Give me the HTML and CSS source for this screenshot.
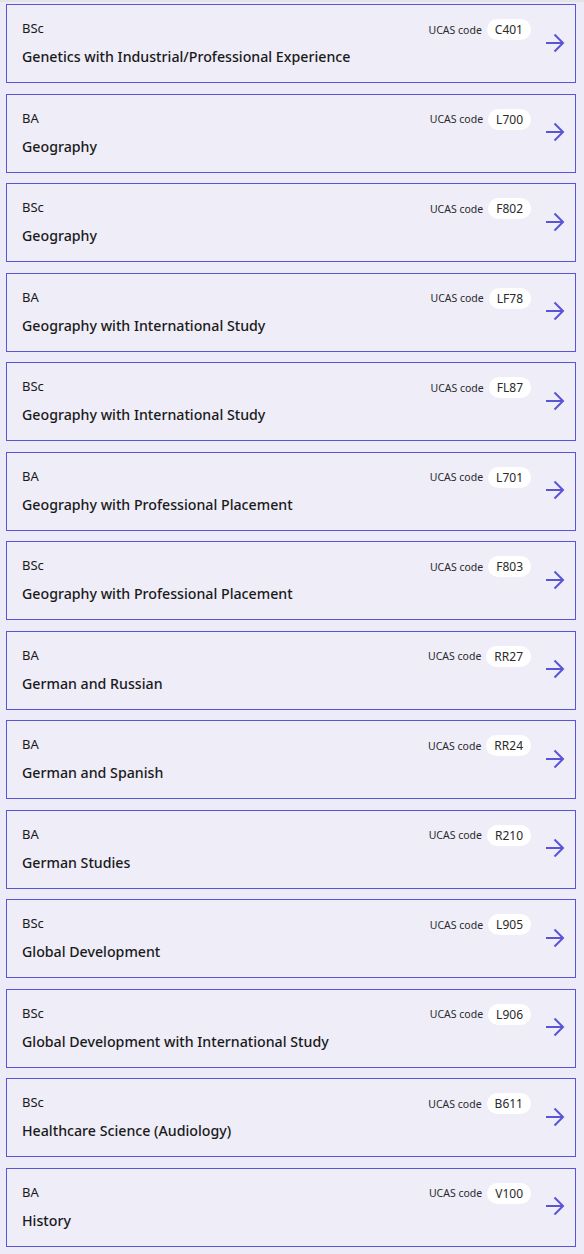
FILE: index.html
```html
<!DOCTYPE html>
<html lang="en">
<head>
    <meta charset="UTF-8" />
    <meta name="viewport" content="width=device-width, initial-scale=1.0" />
    <title>Courses</title>
    <link rel="stylesheet" href="styles.css">
</head>
<body>
    <!-- course list -->
    <ul class="course-list">
        <li class="course">
            <div class="course-info">
                <span class="degree">BSc</span>
                <span class="title">Genetics with Industrial/Professional Experience</span>
            </div>
            <div class="ucas">UCAS code <span class="code">C401</span></div>
            <svg class="arrow" viewBox="0 0 22 20"><path d="M3 10H20M11.5 1.5L20 10L11.5 18.5" /></svg>
        </li>
        <li class="course">
            <div class="course-info">
                <span class="degree">BA</span>
                <span class="title">Geography</span>
            </div>
            <div class="ucas">UCAS code <span class="code">L700</span></div>
            <svg class="arrow" viewBox="0 0 22 20"><path d="M3 10H20M11.5 1.5L20 10L11.5 18.5" /></svg>
        </li>
        <li class="course">
            <div class="course-info">
                <span class="degree">BSc</span>
                <span class="title">Geography</span>
            </div>
            <div class="ucas">UCAS code <span class="code">F802</span></div>
            <svg class="arrow" viewBox="0 0 22 20"><path d="M3 10H20M11.5 1.5L20 10L11.5 18.5" /></svg>
        </li>
        <li class="course">
            <div class="course-info">
                <span class="degree">BA</span>
                <span class="title">Geography with International Study</span>
            </div>
            <div class="ucas">UCAS code <span class="code">LF78</span></div>
            <svg class="arrow" viewBox="0 0 22 20"><path d="M3 10H20M11.5 1.5L20 10L11.5 18.5" /></svg>
        </li>
        <li class="course">
            <div class="course-info">
                <span class="degree">BSc</span>
                <span class="title">Geography with International Study</span>
            </div>
            <div class="ucas">UCAS code <span class="code">FL87</span></div>
            <svg class="arrow" viewBox="0 0 22 20"><path d="M3 10H20M11.5 1.5L20 10L11.5 18.5" /></svg>
        </li>
        <li class="course">
            <div class="course-info">
                <span class="degree">BA</span>
                <span class="title">Geography with Professional Placement</span>
            </div>
            <div class="ucas">UCAS code <span class="code">L701</span></div>
            <svg class="arrow" viewBox="0 0 22 20"><path d="M3 10H20M11.5 1.5L20 10L11.5 18.5" /></svg>
        </li>
        <li class="course">
            <div class="course-info">
                <span class="degree">BSc</span>
                <span class="title">Geography with Professional Placement</span>
            </div>
            <div class="ucas">UCAS code <span class="code">F803</span></div>
            <svg class="arrow" viewBox="0 0 22 20"><path d="M3 10H20M11.5 1.5L20 10L11.5 18.5" /></svg>
        </li>
        <li class="course">
            <div class="course-info">
                <span class="degree">BA</span>
                <span class="title">German and Russian</span>
            </div>
            <div class="ucas">UCAS code <span class="code">RR27</span></div>
            <svg class="arrow" viewBox="0 0 22 20"><path d="M3 10H20M11.5 1.5L20 10L11.5 18.5" /></svg>
        </li>
        <li class="course">
            <div class="course-info">
                <span class="degree">BA</span>
                <span class="title">German and Spanish</span>
            </div>
            <div class="ucas">UCAS code <span class="code">RR24</span></div>
            <svg class="arrow" viewBox="0 0 22 20"><path d="M3 10H20M11.5 1.5L20 10L11.5 18.5" /></svg>
        </li>
        <li class="course">
            <div class="course-info">
                <span class="degree">BA</span>
                <span class="title">German Studies</span>
            </div>
            <div class="ucas">UCAS code <span class="code">R210</span></div>
            <svg class="arrow" viewBox="0 0 22 20"><path d="M3 10H20M11.5 1.5L20 10L11.5 18.5" /></svg>
        </li>
        <li class="course">
            <div class="course-info">
                <span class="degree">BSc</span>
                <span class="title">Global Development</span>
            </div>
            <div class="ucas">UCAS code <span class="code">L905</span></div>
            <svg class="arrow" viewBox="0 0 22 20"><path d="M3 10H20M11.5 1.5L20 10L11.5 18.5" /></svg>
        </li>
        <li class="course">
            <div class="course-info">
                <span class="degree">BSc</span>
                <span class="title">Global Development with International Study</span>
            </div>
            <div class="ucas">UCAS code <span class="code">L906</span></div>
            <svg class="arrow" viewBox="0 0 22 20"><path d="M3 10H20M11.5 1.5L20 10L11.5 18.5" /></svg>
        </li>
        <li class="course">
            <div class="course-info">
                <span class="degree">BSc</span>
                <span class="title">Healthcare Science (Audiology)</span>
            </div>
            <div class="ucas">UCAS code <span class="code">B611</span></div>
            <svg class="arrow" viewBox="0 0 22 20"><path d="M3 10H20M11.5 1.5L20 10L11.5 18.5" /></svg>
        </li>
        <li class="course">
            <div class="course-info">
                <span class="degree">BA</span>
                <span class="title">History</span>
            </div>
            <div class="ucas">UCAS code <span class="code">V100</span></div>
            <svg class="arrow" viewBox="0 0 22 20"><path d="M3 10H20M11.5 1.5L20 10L11.5 18.5" /></svg>
        </li>
    </ul>
</body>
</html>
```

FILE: styles.css
```css
body {
    margin:0;
    padding:2px 8px 0 6px;
    border-top:2px solid #e4e4e8;
    background:#ecebf7;
    color:#1a1a1a;
    font-family:"Noto Sans", "Open Sans", sans-serif;
}
.course-list {
    display:flex;
    flex-direction:column;
    gap:10.5px;
    margin:0;
    padding:0;
    list-style:none;
}
.course {
    display:flex;
    padding:14px 10px 16px 15px;
    border:1px solid #5a55d6;
    background:#eeedf8;
}
.course-info {
    display:flex;
    flex-direction:column;
    flex:1;
    gap:10px;
}
.degree {
    font-size:13px;
    line-height:18px;
}
.title {
    font-size:14.2px;
    line-height:19px;
    font-weight:500;
}
.ucas {
    display:flex;
    align-items:center;
    gap:5px;
    align-self:flex-start;
    font-size:10.5px;
    color:#2a2a2a;
}
.code {
    padding:2px 8px;
    border-radius:11px;
    background:#fff;
    font-size:12px;
    line-height:17px;
}
.arrow {
    align-self:center;
    width:22px;
    height:20px;
    margin-left:12px;
    fill:none;
    stroke:#5a55d6;
    stroke-width:2;
}
```
